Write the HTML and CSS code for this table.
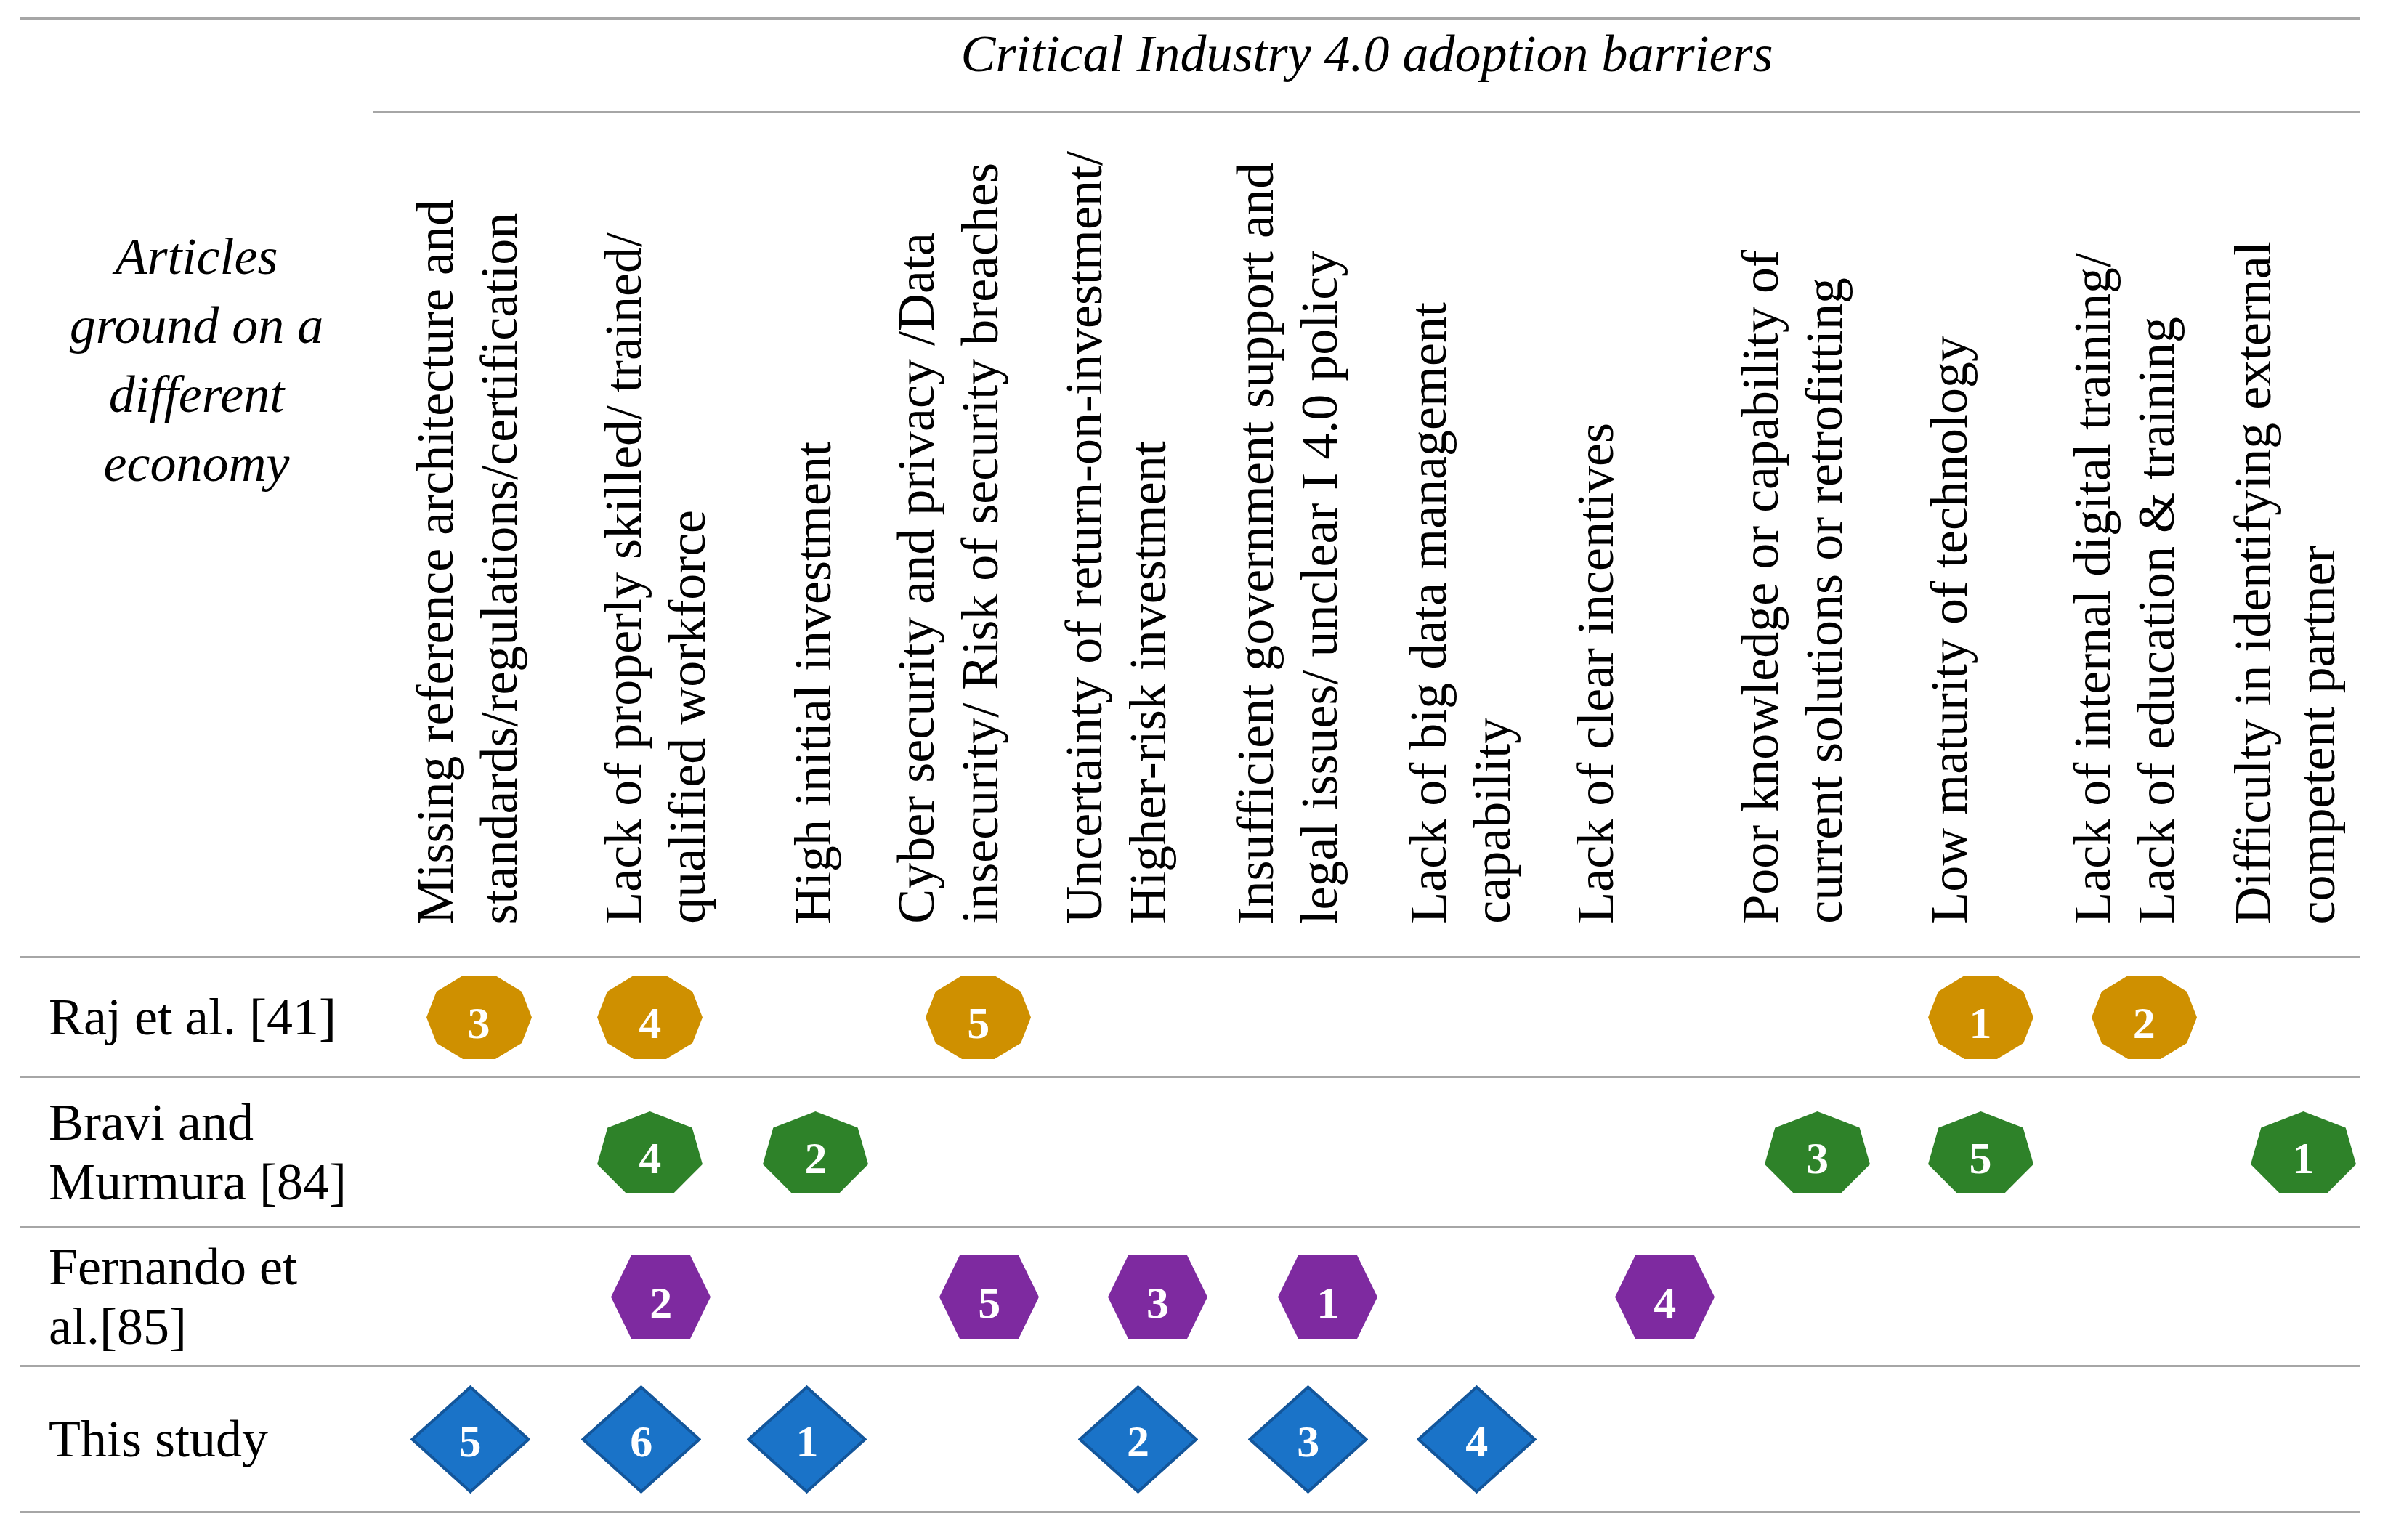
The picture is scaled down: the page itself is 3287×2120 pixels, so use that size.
FILE: index.html
```html
<!DOCTYPE html>
<html lang="en">
<head>
<meta charset="utf-8">
<title>Critical Industry 4.0 adoption barriers</title>
<link rel="stylesheet" href="styles.css">
</head>
<body>
<div class="table">
  <div class="head">
    <div class="corner">Articles<br>ground on a<br>different<br>economy</div>
    <div class="head-main">
      <div class="title">Critical Industry 4.0 adoption barriers</div>
      <div class="hcols">
        <div class="hcol"><span class="vtext">Missing reference architecture and<br>standards/regulations/certification</span></div>
        <div class="hcol"><span class="vtext">Lack of properly skilled/ trained/<br>qualified workforce</span></div>
        <div class="hcol"><span class="vtext">High initial investment</span></div>
        <div class="hcol"><span class="vtext">Cyber security and privacy /Data<br>insecurity/ Risk of security breaches</span></div>
        <div class="hcol"><span class="vtext">Uncertainty of return-on-investment/<br>Higher-risk investment</span></div>
        <div class="hcol"><span class="vtext">Insufficient government support and<br>legal issues/ unclear I 4.0 policy</span></div>
        <div class="hcol"><span class="vtext">Lack of big data management<br>capability</span></div>
        <div class="hcol"><span class="vtext">Lack of clear incentives</span></div>
        <div class="hcol"><span class="vtext">Poor knowledge or capability of<br>current solutions or retrofitting</span></div>
        <div class="hcol"><span class="vtext">Low maturity of technology</span></div>
        <div class="hcol"><span class="vtext">Lack of internal digital training/<br>Lack of education &amp; training</span></div>
        <div class="hcol"><span class="vtext">Difficulty in identifying external<br>competent partner</span></div>
      </div>
    </div>
  </div>

  <div class="row row-raj">
    <div class="label">Raj et al. [41]</div>
    <div class="mk c1"><svg class="shape" width="145" height="115" viewBox="0 0 145 115"><polygon class="deca" points="0,57.5 13.85,21.94 50.1,0 94.9,0 131.15,21.94 145,57.5 131.15,93.06 94.9,115 50.1,115 13.85,93.06"/></svg><span class="num">3</span></div>
    <div class="mk c2"><svg class="shape" width="145" height="115" viewBox="0 0 145 115"><polygon class="deca" points="0,57.5 13.85,21.94 50.1,0 94.9,0 131.15,21.94 145,57.5 131.15,93.06 94.9,115 50.1,115 13.85,93.06"/></svg><span class="num">4</span></div>
    <div class="mk c4"><svg class="shape" width="145" height="115" viewBox="0 0 145 115"><polygon class="deca" points="0,57.5 13.85,21.94 50.1,0 94.9,0 131.15,21.94 145,57.5 131.15,93.06 94.9,115 50.1,115 13.85,93.06"/></svg><span class="num">5</span></div>
    <div class="mk c10"><svg class="shape" width="145" height="115" viewBox="0 0 145 115"><polygon class="deca" points="0,57.5 13.85,21.94 50.1,0 94.9,0 131.15,21.94 145,57.5 131.15,93.06 94.9,115 50.1,115 13.85,93.06"/></svg><span class="num">1</span></div>
    <div class="mk c11"><svg class="shape" width="145" height="115" viewBox="0 0 145 115"><polygon class="deca" points="0,57.5 13.85,21.94 50.1,0 94.9,0 131.15,21.94 145,57.5 131.15,93.06 94.9,115 50.1,115 13.85,93.06"/></svg><span class="num">2</span></div>
  </div>

  <div class="row row-bravi">
    <div class="label">Bravi and<br>Murmura [84]</div>
    <div class="mk c2"><svg class="shape" width="145" height="113" viewBox="0 0 145 113"><polygon class="hepta" points="72.5,0 130.7,22.4 145,72.7 104.8,113 40.2,113 0,72.7 14.3,22.4"/></svg><span class="num">4</span></div>
    <div class="mk c3"><svg class="shape" width="145" height="113" viewBox="0 0 145 113"><polygon class="hepta" points="72.5,0 130.7,22.4 145,72.7 104.8,113 40.2,113 0,72.7 14.3,22.4"/></svg><span class="num">2</span></div>
    <div class="mk c9"><svg class="shape" width="145" height="113" viewBox="0 0 145 113"><polygon class="hepta" points="72.5,0 130.7,22.4 145,72.7 104.8,113 40.2,113 0,72.7 14.3,22.4"/></svg><span class="num">3</span></div>
    <div class="mk c10"><svg class="shape" width="145" height="113" viewBox="0 0 145 113"><polygon class="hepta" points="72.5,0 130.7,22.4 145,72.7 104.8,113 40.2,113 0,72.7 14.3,22.4"/></svg><span class="num">5</span></div>
    <div class="mk c12"><svg class="shape" width="145" height="113" viewBox="0 0 145 113"><polygon class="hepta" points="72.5,0 130.7,22.4 145,72.7 104.8,113 40.2,113 0,72.7 14.3,22.4"/></svg><span class="num">1</span></div>
  </div>

  <div class="row row-fernando">
    <div class="label">Fernando et<br>al.[85]</div>
    <div class="mk c2"><svg class="shape" width="137" height="115" viewBox="0 0 137 115"><polygon class="hexa" points="28,0 109,0 137,57.5 109,115 28,115 0,57.5"/></svg><span class="num">2</span></div>
    <div class="mk c4"><svg class="shape" width="137" height="115" viewBox="0 0 137 115"><polygon class="hexa" points="28,0 109,0 137,57.5 109,115 28,115 0,57.5"/></svg><span class="num">5</span></div>
    <div class="mk c5"><svg class="shape" width="137" height="115" viewBox="0 0 137 115"><polygon class="hexa" points="28,0 109,0 137,57.5 109,115 28,115 0,57.5"/></svg><span class="num">3</span></div>
    <div class="mk c6"><svg class="shape" width="137" height="115" viewBox="0 0 137 115"><polygon class="hexa" points="28,0 109,0 137,57.5 109,115 28,115 0,57.5"/></svg><span class="num">1</span></div>
    <div class="mk c8"><svg class="shape" width="137" height="115" viewBox="0 0 137 115"><polygon class="hexa" points="28,0 109,0 137,57.5 109,115 28,115 0,57.5"/></svg><span class="num">4</span></div>
  </div>

  <div class="row row-study">
    <div class="label">This study</div>
    <div class="mk c1"><svg class="shape" width="165" height="149" viewBox="0 0 165 149"><polygon class="dia" points="82.5,2.5 162.5,74.5 82.5,146.5 2.5,74.5"/></svg><span class="num num-dia">5</span></div>
    <div class="mk c2"><svg class="shape" width="165" height="149" viewBox="0 0 165 149"><polygon class="dia" points="82.5,2.5 162.5,74.5 82.5,146.5 2.5,74.5"/></svg><span class="num num-dia">6</span></div>
    <div class="mk c3"><svg class="shape" width="165" height="149" viewBox="0 0 165 149"><polygon class="dia" points="82.5,2.5 162.5,74.5 82.5,146.5 2.5,74.5"/></svg><span class="num num-dia">1</span></div>
    <div class="mk c5"><svg class="shape" width="165" height="149" viewBox="0 0 165 149"><polygon class="dia" points="82.5,2.5 162.5,74.5 82.5,146.5 2.5,74.5"/></svg><span class="num num-dia">2</span></div>
    <div class="mk c6"><svg class="shape" width="165" height="149" viewBox="0 0 165 149"><polygon class="dia" points="82.5,2.5 162.5,74.5 82.5,146.5 2.5,74.5"/></svg><span class="num num-dia">3</span></div>
    <div class="mk c7"><svg class="shape" width="165" height="149" viewBox="0 0 165 149"><polygon class="dia" points="82.5,2.5 162.5,74.5 82.5,146.5 2.5,74.5"/></svg><span class="num num-dia">4</span></div>
  </div>
</div>
</body>
</html>
```

FILE: styles.css
```css
html, body {
  margin: 0;
  padding: 0;
  background: #ffffff;
}

.table {
  margin: 24px 0 0 27px;
  width: 3222px;
  border-top: 3px solid #a6a6a6;
  border-bottom: 3px solid #a6a6a6;
  font-family: "Liberation Serif", "Times New Roman", serif;
  font-size: 72px;
  color: #000000;
}

/* ---------- header ---------- */
.head {
  display: flex;
  height: 1289px;
}

.corner {
  width: 487px;
  flex: 0 0 487px;
  box-sizing: border-box;
  padding-top: 279px;
  text-align: center;
  font-style: italic;
  line-height: 95px;
}

.head-main {
  flex: 1;
  display: flex;
  flex-direction: column;
}

.title {
  height: 129px;
  box-sizing: border-box;
  padding-top: 11px;
  border-bottom: 3px solid #a6a6a6;
  text-align: center;
  font-style: italic;
  line-height: 72px;
}

.hcols {
  flex: 1;
  display: grid;
  grid-template-columns: 258.5px 261.5px 142px 231px 236px 237.5px 230.5px 227px 260px 197px 221px 192px;
  padding-left: 41px;
}

.hcol {
  display: flex;
  justify-content: flex-start;
  align-items: flex-end;
  padding-bottom: 44px;
}

.vtext {
  display: inline-block;
  writing-mode: vertical-rl;
  transform: rotate(180deg);
  white-space: nowrap;
  line-height: 88px;
  text-align: start;
}

/* ---------- body rows ---------- */
.row {
  display: grid;
  grid-template-columns: 513px 238px 233.5px 222.75px 224.75px 238.75px 229.75px 234.5px 229.5px 219.75px 229.5px 220.75px 187.5px;
  align-items: center;
  border-top: 3px solid #a6a6a6;
}

.row > * {
  grid-row: 1;
}

.row-raj { height: 162px; }
.row-bravi { height: 204px; }
.row-fernando { height: 188px; }
.row-study { height: 198px; }

.label {
  grid-column: 1;
  padding-left: 40px;
  line-height: 82px;
}

.c1 { grid-column: 2; }
.c2 { grid-column: 3; }
.c3 { grid-column: 4; }
.c4 { grid-column: 5; }
.c5 { grid-column: 6; }
.c6 { grid-column: 7; }
.c7 { grid-column: 8; }
.c8 { grid-column: 9; }
.c9 { grid-column: 10; }
.c10 { grid-column: 11; }
.c11 { grid-column: 12; }
.c12 {
  grid-column: 13;
  justify-self: end;
  margin-right: 6px;
}

/* ---------- markers ---------- */
.mk {
  justify-self: center;
  display: grid;
  place-items: center;
}

.mk.c12 {
  justify-self: end;
}

.row-fernando .mk { transform: translateX(15px); }
.row-study .mk { transform: translateX(-12px); }

.mk > .shape,
.mk > .num {
  grid-area: 1 / 1;
}

.shape {
  display: block;
}

.deca { fill: #cf9000; }
.hepta { fill: #2e8229; }
.hexa { fill: #7e2aa0; }
.dia {
  fill: #1a73c8;
  stroke: #13569b;
  stroke-width: 4;
  stroke-linejoin: miter;
}

.num {
  color: #ffffff;
  font-weight: bold;
  font-size: 62px;
  line-height: 62px;
  padding-top: 16px;
}

.num-dia {
  padding-top: 5px;
}
```
